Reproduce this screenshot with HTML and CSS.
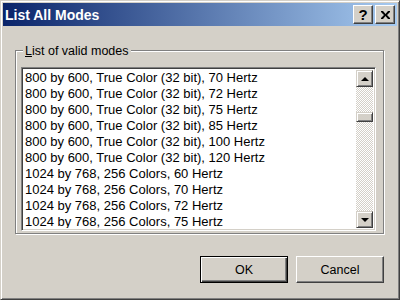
FILE: index.html
```html
<!DOCTYPE html>
<html lang="en">
<head>
<meta charset="UTF-8">
<title>List All Modes</title>
<link rel="stylesheet" href="styles.css">
</head>
<body>
<div class="window">
  <div class="titlebar">
    <span class="title">List All Modes</span>
    <div class="caption-btns">
      <div class="cap-btn help">?</div>
      <div class="cap-btn close">
        <svg width="9" height="8" viewBox="0 0 9 8"><path d="M0 0h2l2.5 3 2.5-3h2v1l-3 3 3 3v1h-2l-2.5-3-2.5 3h-2v-1l3-3-3-3z" fill="#000"/></svg>
      </div>
    </div>
  </div>
  <div class="content">
    <div class="group">
      <div class="group-label"><u>L</u>ist of valid modes</div>
      <div class="listbox">
        <ul class="items">
          <li>800 by 600, True Color (32 bit), 70 Hertz</li>
          <li>800 by 600, True Color (32 bit), 72 Hertz</li>
          <li>800 by 600, True Color (32 bit), 75 Hertz</li>
          <li>800 by 600, True Color (32 bit), 85 Hertz</li>
          <li>800 by 600, True Color (32 bit), 100 Hertz</li>
          <li>800 by 600, True Color (32 bit), 120 Hertz</li>
          <li>1024 by 768, 256 Colors, 60 Hertz</li>
          <li>1024 by 768, 256 Colors, 70 Hertz</li>
          <li>1024 by 768, 256 Colors, 72 Hertz</li>
          <li>1024 by 768, 256 Colors, 75 Hertz</li>
        </ul>
        <div class="scrollbar">
          <div class="sb-btn"><span class="arrow up"></span></div>
          <div class="sb-track">
            <div class="sb-thumb"></div>
          </div>
          <div class="sb-btn"><span class="arrow down"></span></div>
        </div>
      </div>
    </div>
    <div class="actions">
      <div class="btn default"><span>OK</span></div>
      <div class="btn"><span>Cancel</span></div>
    </div>
  </div>
</div>
</body>
</html>
```

FILE: styles.css
```css
body {margin:0; background:#d4d0c8; font-family:'Liberation Sans', Arial, sans-serif; font-size:12.5px; color:#000;}
.window {
  width:400px; height:300px; box-sizing:border-box;
  background:#d4d0c8;
  border:1px solid; border-color:#d4d0c8 #404040 #404040 #d4d0c8;
  box-shadow:inset 1px 1px #fff, inset -1px -1px #808080;
  padding:2px;
  display:flex; flex-direction:column;
}
.titlebar {
  height:23px; display:flex; align-items:center; justify-content:space-between;
  background:linear-gradient(to right, #0a246a, #a6caf0);
  padding:0 2px 0 2px;
}
.title {color:#fff; font-weight:bold; font-size:14px;}
.caption-btns {display:flex; gap:2px;}
.cap-btn {
  width:20px; height:19px; box-sizing:border-box;
  background:#d4d0c8;
  border:1px solid; border-color:#fff #404040 #404040 #fff;
  box-shadow:inset -1px -1px #808080;
  display:flex; align-items:center; justify-content:center;
}
.help {font-weight:bold; font-size:15px; line-height:1;}
.content {flex:1; padding:24px 13px 0 12px; display:flex; flex-direction:column;}
.group {
  position:relative; height:184px; box-sizing:border-box;
  border:1px solid #808080;
  box-shadow:inset 1px 1px #fff, 1px 1px #fff;
  padding:16px 7px 0 5px;
}
.group-label {position:absolute; top:-8px; left:7px; padding:0 2px; background:#d4d0c8; line-height:16px;}
.listbox {
  display:flex; height:164px; box-sizing:border-box; background:#fff;
  border:1px solid; border-color:#808080 #fff #fff #808080;
  box-shadow:inset 1px 1px #404040, inset -1px -1px #d4d0c8;
  padding:2px;
}
.items {flex:1; list-style:none; margin:0; padding:0; overflow:hidden; font-size:13px;}
.items li {height:16px; line-height:16px; padding-left:1px; white-space:nowrap;}
.scrollbar {width:17px; display:flex; flex-direction:column;}
.sb-btn, .sb-thumb {
  box-sizing:border-box; background:#d4d0c8;
  border:1px solid; border-color:#d4d0c8 #404040 #404040 #d4d0c8;
  box-shadow:inset 1px 1px #fff, inset -1px -1px #808080;
}
.sb-btn {height:17px; display:flex; align-items:center; justify-content:center;}
.sb-track {flex:1; padding-top:25px; background:repeating-conic-gradient(#fff 0 25%, #d4d0c8 0 50%) 0 0/2px 2px;}
.sb-thumb {height:10px;}
.arrow {width:0; height:0; border-left:4px solid transparent; border-right:4px solid transparent;}
.arrow.up {border-bottom:4px solid #000;}
.arrow.down {border-top:4px solid #000;}
.actions {display:flex; justify-content:flex-end; gap:8px; margin-top:22px;}
.btn {
  width:88px; height:27px; box-sizing:border-box; background:#d4d0c8;
  border:1px solid; border-color:#fff #404040 #404040 #fff;
  box-shadow:inset -1px -1px #808080;
  display:flex; align-items:center; justify-content:center;
}
.btn.default {
  border:1px solid #000;
  box-shadow:inset 1px 1px #fff, inset -1px -1px #404040, inset -2px -2px #808080;
}
```
